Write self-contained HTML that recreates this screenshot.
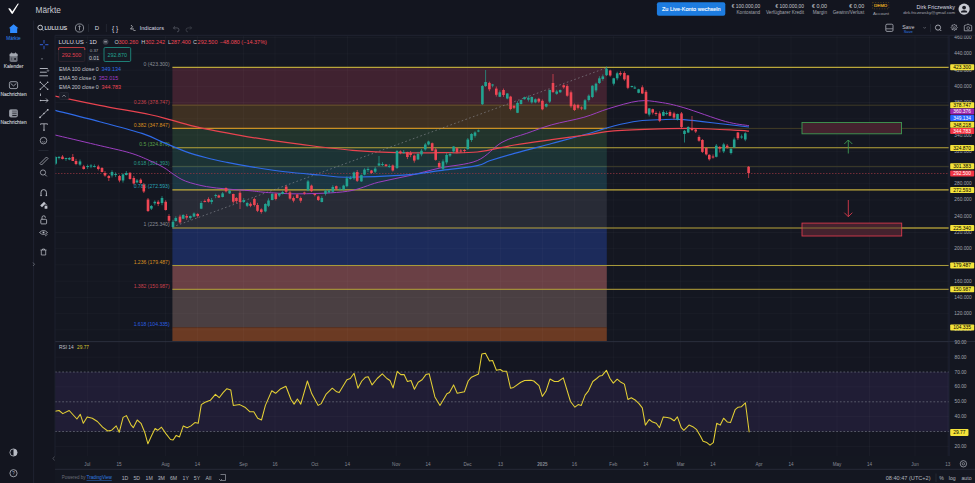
<!DOCTYPE html>
<html><head><meta charset='utf-8'><style>
html,body{margin:0;padding:0;width:975px;height:483px;overflow:hidden;background:#13151f;}
text{font-family:'Liberation Sans',sans-serif;}
</style></head><body>
<svg width='975' height='483' viewBox='0 0 975 483' style='position:absolute;left:0;top:0' font-family="'Liberation Sans', sans-serif"><rect width='975' height='483' fill='#13151f'/><rect x='55' y='35.5' width='920' height='447.5' fill='#141721'/><defs><clipPath id='mc'><rect x='55' y='35.5' width='894' height='305.5'/></clipPath><clipPath id='rc'><rect x='55' y='341.5' width='894' height='114.5'/></clipPath></defs><g clip-path='url(#mc)'><rect x='172.4' y='67.4' width='434.4' height='37.8' fill='#402230'/><rect x='172.4' y='105.2' width='434.4' height='23.200000000000003' fill='#3e3022'/><rect x='172.4' y='128.4' width='434.4' height='19.299999999999983' fill='#22342c'/><rect x='172.4' y='147.7' width='434.4' height='18.700000000000017' fill='#1c3335'/><rect x='172.4' y='166.4' width='434.4' height='23.400000000000006' fill='#1b3642'/><rect x='172.4' y='189.8' width='434.4' height='38.19999999999999' fill='#282b36'/><rect x='172.4' y='228' width='434.4' height='37.5' fill='#1c2b5b'/><rect x='172.4' y='265.5' width='434.4' height='23.80000000000001' fill='#6a4045'/><rect x='172.4' y='289.3' width='434.4' height='38.0' fill='#4a3f42'/><rect x='172.4' y='327.3' width='434.4' height='17.69999999999999' fill='#6b3a23'/><line x1='87.3' y1='35.5' x2='87.3' y2='341' stroke='#ffffff' stroke-opacity='0.035' stroke-width='0.8'/><line x1='119' y1='35.5' x2='119' y2='341' stroke='#ffffff' stroke-opacity='0.035' stroke-width='0.8'/><line x1='165.6' y1='35.5' x2='165.6' y2='341' stroke='#ffffff' stroke-opacity='0.035' stroke-width='0.8'/><line x1='197.4' y1='35.5' x2='197.4' y2='341' stroke='#ffffff' stroke-opacity='0.035' stroke-width='0.8'/><line x1='243.4' y1='35.5' x2='243.4' y2='341' stroke='#ffffff' stroke-opacity='0.035' stroke-width='0.8'/><line x1='275' y1='35.5' x2='275' y2='341' stroke='#ffffff' stroke-opacity='0.035' stroke-width='0.8'/><line x1='314.8' y1='35.5' x2='314.8' y2='341' stroke='#ffffff' stroke-opacity='0.035' stroke-width='0.8'/><line x1='347.4' y1='35.5' x2='347.4' y2='341' stroke='#ffffff' stroke-opacity='0.035' stroke-width='0.8'/><line x1='396.2' y1='35.5' x2='396.2' y2='341' stroke='#ffffff' stroke-opacity='0.035' stroke-width='0.8'/><line x1='428' y1='35.5' x2='428' y2='341' stroke='#ffffff' stroke-opacity='0.035' stroke-width='0.8'/><line x1='467.6' y1='35.5' x2='467.6' y2='341' stroke='#ffffff' stroke-opacity='0.035' stroke-width='0.8'/><line x1='500.6' y1='35.5' x2='500.6' y2='341' stroke='#ffffff' stroke-opacity='0.035' stroke-width='0.8'/><line x1='542.4' y1='35.5' x2='542.4' y2='341' stroke='#ffffff' stroke-opacity='0.035' stroke-width='0.8'/><line x1='574.4' y1='35.5' x2='574.4' y2='341' stroke='#ffffff' stroke-opacity='0.035' stroke-width='0.8'/><line x1='613.3' y1='35.5' x2='613.3' y2='341' stroke='#ffffff' stroke-opacity='0.035' stroke-width='0.8'/><line x1='645.7' y1='35.5' x2='645.7' y2='341' stroke='#ffffff' stroke-opacity='0.035' stroke-width='0.8'/><line x1='680.6' y1='35.5' x2='680.6' y2='341' stroke='#ffffff' stroke-opacity='0.035' stroke-width='0.8'/><line x1='712.9' y1='35.5' x2='712.9' y2='341' stroke='#ffffff' stroke-opacity='0.035' stroke-width='0.8'/><line x1='759' y1='35.5' x2='759' y2='341' stroke='#ffffff' stroke-opacity='0.035' stroke-width='0.8'/><line x1='791' y1='35.5' x2='791' y2='341' stroke='#ffffff' stroke-opacity='0.035' stroke-width='0.8'/><line x1='837' y1='35.5' x2='837' y2='341' stroke='#ffffff' stroke-opacity='0.035' stroke-width='0.8'/><line x1='869.5' y1='35.5' x2='869.5' y2='341' stroke='#ffffff' stroke-opacity='0.035' stroke-width='0.8'/><line x1='915' y1='35.5' x2='915' y2='341' stroke='#ffffff' stroke-opacity='0.035' stroke-width='0.8'/><line x1='947.8' y1='35.5' x2='947.8' y2='341' stroke='#ffffff' stroke-opacity='0.035' stroke-width='0.8'/><line x1='55' y1='37.6' x2='949' y2='37.6' stroke='#ffffff' stroke-opacity='0.035' stroke-width='0.8'/><line x1='55' y1='53.8' x2='949' y2='53.8' stroke='#ffffff' stroke-opacity='0.035' stroke-width='0.8'/><line x1='55' y1='70.1' x2='949' y2='70.1' stroke='#ffffff' stroke-opacity='0.035' stroke-width='0.8'/><line x1='55' y1='86.3' x2='949' y2='86.3' stroke='#ffffff' stroke-opacity='0.035' stroke-width='0.8'/><line x1='55' y1='102.5' x2='949' y2='102.5' stroke='#ffffff' stroke-opacity='0.035' stroke-width='0.8'/><line x1='55' y1='118.8' x2='949' y2='118.8' stroke='#ffffff' stroke-opacity='0.035' stroke-width='0.8'/><line x1='55' y1='135.0' x2='949' y2='135.0' stroke='#ffffff' stroke-opacity='0.035' stroke-width='0.8'/><line x1='55' y1='151.3' x2='949' y2='151.3' stroke='#ffffff' stroke-opacity='0.035' stroke-width='0.8'/><line x1='55' y1='167.5' x2='949' y2='167.5' stroke='#ffffff' stroke-opacity='0.035' stroke-width='0.8'/><line x1='55' y1='183.7' x2='949' y2='183.7' stroke='#ffffff' stroke-opacity='0.035' stroke-width='0.8'/><line x1='55' y1='200.0' x2='949' y2='200.0' stroke='#ffffff' stroke-opacity='0.035' stroke-width='0.8'/><line x1='55' y1='216.2' x2='949' y2='216.2' stroke='#ffffff' stroke-opacity='0.035' stroke-width='0.8'/><line x1='55' y1='232.5' x2='949' y2='232.5' stroke='#ffffff' stroke-opacity='0.035' stroke-width='0.8'/><line x1='55' y1='248.7' x2='949' y2='248.7' stroke='#ffffff' stroke-opacity='0.035' stroke-width='0.8'/><line x1='55' y1='264.9' x2='949' y2='264.9' stroke='#ffffff' stroke-opacity='0.035' stroke-width='0.8'/><line x1='55' y1='281.2' x2='949' y2='281.2' stroke='#ffffff' stroke-opacity='0.035' stroke-width='0.8'/><line x1='55' y1='297.4' x2='949' y2='297.4' stroke='#ffffff' stroke-opacity='0.035' stroke-width='0.8'/><line x1='55' y1='313.7' x2='949' y2='313.7' stroke='#ffffff' stroke-opacity='0.035' stroke-width='0.8'/><line x1='55' y1='329.9' x2='949' y2='329.9' stroke='#ffffff' stroke-opacity='0.035' stroke-width='0.8'/><line x1='172.4' y1='67.4' x2='949' y2='67.4' stroke='#b9a63a' stroke-width='1.3'/><line x1='172.4' y1='105.2' x2='949' y2='105.2' stroke='#3f3b26' stroke-width='1'/><line x1='172.4' y1='128.4' x2='949' y2='128.4' stroke='#423d27' stroke-width='1'/><line x1='172.4' y1='147.7' x2='949' y2='147.7' stroke='#b9a63a' stroke-width='1.1'/><line x1='172.4' y1='166.4' x2='949' y2='166.4' stroke='#3d3c2a' stroke-width='1'/><line x1='172.4' y1='189.8' x2='949' y2='189.8' stroke='#c2ad3c' stroke-width='1.3'/><line x1='172.4' y1='228' x2='949' y2='228' stroke='#b9a63a' stroke-width='1.2'/><line x1='172.4' y1='265.5' x2='949' y2='265.5' stroke='#a89a3a' stroke-width='1'/><line x1='172.4' y1='289.3' x2='949' y2='289.3' stroke='#b9a63a' stroke-width='1'/><line x1='172.4' y1='327.3' x2='949' y2='327.3' stroke='#3c3a2e' stroke-width='0.0'/><line x1='172.4' y1='128.4' x2='606.8' y2='128.4' stroke='#c98f25' stroke-width='1.1'/><line x1='172.4' y1='105.2' x2='606.8' y2='105.2' stroke='#6b4f2a' stroke-width='1'/><line x1='172.4' y1='166.4' x2='606.8' y2='166.4' stroke='#3f5a4a' stroke-width='1'/><line x1='172.5' y1='227' x2='606' y2='68' stroke='#9598a1' stroke-width='0.8' stroke-dasharray='1.6,2.4' opacity='0.7'/><line x1='55' y1='173.5' x2='949' y2='173.5' stroke='#9a3540' stroke-width='0.7' stroke-dasharray='1.5,1.5'/><text x='169.6' y='63.800000000000004' font-size='5.1' fill='#8a8d96' text-anchor='end' font-weight='normal' dominant-baseline='central' >0 (423.300)</text><text x='169.6' y='101.60000000000001' font-size='5.1' fill='#c8404c' text-anchor='end' font-weight='normal' dominant-baseline='central' >0.236 (378.747)</text><text x='169.6' y='124.80000000000001' font-size='5.1' fill='#d88e1e' text-anchor='end' font-weight='normal' dominant-baseline='central' >0.382 (347.847)</text><text x='169.6' y='144.1' font-size='5.1' fill='#58a04a' text-anchor='end' font-weight='normal' dominant-baseline='central' >0.5 (324.870)</text><text x='169.6' y='162.8' font-size='5.1' fill='#2a9a88' text-anchor='end' font-weight='normal' dominant-baseline='central' >0.618 (301.393)</text><text x='169.6' y='186.20000000000002' font-size='5.1' fill='#2aa3b8' text-anchor='end' font-weight='normal' dominant-baseline='central' >0.786 (272.593)</text><text x='169.6' y='224.4' font-size='5.1' fill='#8a8d96' text-anchor='end' font-weight='normal' dominant-baseline='central' >1 (225.340)</text><text x='169.6' y='261.9' font-size='5.1' fill='#d89020' text-anchor='end' font-weight='normal' dominant-baseline='central' >1.236 (179.487)</text><text x='169.6' y='285.7' font-size='5.1' fill='#c8404c' text-anchor='end' font-weight='normal' dominant-baseline='central' >1.382 (150.987)</text><text x='169.6' y='323.7' font-size='5.1' fill='#2a5ee0' text-anchor='end' font-weight='normal' dominant-baseline='central' >1.618 (104.335)</text><path d='M55.0,135.0 C61.8,136.6 83.1,141.6 95.6,144.6 C108.0,147.6 120.6,150.1 129.7,152.8 C138.8,155.5 144.5,158.3 150.2,160.8 C155.9,163.3 160.1,165.4 163.9,167.6 C167.8,169.8 169.7,171.9 173.3,174.2 C176.9,176.5 180.2,179.1 185.7,181.2 C191.2,183.3 199.5,185.3 206.4,186.6 C213.3,187.9 219.7,188.3 227.0,189.0 C234.3,189.7 243.1,190.1 250.0,190.7 C256.9,191.3 260.0,192.1 268.5,192.6 C277.0,193.1 287.9,194.0 301.0,193.8 C314.1,193.6 334.5,193.2 347.4,191.3 C360.3,189.4 367.8,184.9 378.2,182.3 C388.6,179.7 399.7,177.9 410.0,175.5 C420.3,173.1 428.8,170.5 440.0,168.0 C451.2,165.5 466.9,164.9 477.2,160.6 C487.5,156.3 493.7,146.9 502.0,142.3 C510.3,137.8 518.5,136.2 526.8,133.3 C535.1,130.4 542.2,127.5 551.7,124.8 C561.2,122.1 574.4,120.0 583.9,117.3 C593.4,114.6 599.6,111.3 608.7,108.6 C617.8,105.9 630.0,102.0 638.5,101.0 C647.0,100.0 652.4,101.2 660.0,102.3 C667.6,103.4 673.0,104.5 683.9,107.7 C694.8,110.9 714.6,118.5 725.5,121.5 C736.4,124.5 745.1,125.0 749.0,125.7' fill='none' stroke='#9c3fc0' stroke-width='1.0'/><path d='M55.0,110.3 C62.5,112.2 85.2,117.8 99.7,121.7 C114.2,125.6 131.1,129.8 142.0,133.4 C152.9,137.0 157.7,140.1 165.0,143.1 C172.3,146.1 178.8,149.1 185.7,151.6 C192.6,154.1 199.5,156.0 206.4,157.8 C213.3,159.6 219.7,160.9 227.0,162.4 C234.3,163.9 240.3,165.0 250.0,166.6 C259.7,168.2 273.3,170.4 285.0,171.8 C296.7,173.2 309.6,174.1 320.0,175.0 C330.4,175.9 333.4,177.2 347.4,177.2 C361.4,177.2 388.4,176.2 403.8,175.1 C419.2,174.0 427.8,172.2 440.0,170.6 C452.2,169.0 468.9,167.2 477.2,165.6 C485.5,164.0 483.4,162.8 489.6,160.8 C495.8,158.8 504.0,156.3 514.4,153.4 C524.8,150.5 539.3,146.8 551.7,143.5 C564.1,140.2 578.6,136.4 588.9,133.5 C599.2,130.6 605.4,128.1 613.7,126.0 C622.0,123.9 630.8,122.0 638.5,121.0 C646.2,120.0 652.4,119.9 660.0,119.7 C667.6,119.5 673.0,118.8 683.9,119.6 C694.8,120.4 714.6,123.1 725.5,124.3 C736.4,125.5 745.1,126.5 749.0,127.0' fill='none' stroke='#2f6be8' stroke-width='1.15'/><path d='M55.0,96.1 C62.5,97.6 84.0,102.2 99.7,105.3 C115.4,108.4 137.4,112.0 149.4,114.5 C161.4,117.0 163.3,118.0 171.7,120.2 C180.1,122.4 188.3,125.1 199.7,127.6 C211.1,130.1 228.3,133.2 240.0,135.3 C251.7,137.4 259.8,138.7 270.0,140.2 C280.2,141.7 287.2,142.7 301.0,144.4 C314.8,146.1 335.5,148.9 352.6,150.3 C369.7,151.7 389.2,152.4 403.8,152.8 C418.4,153.2 427.8,152.8 440.0,152.7 C452.2,152.6 464.8,153.3 477.2,152.0 C489.6,150.7 502.0,147.1 514.4,145.0 C526.8,142.9 539.3,141.3 551.7,139.6 C564.1,137.9 578.6,136.0 588.9,134.6 C599.2,133.2 601.9,131.8 613.7,130.9 C625.6,130.0 646.0,129.3 660.0,128.9 C674.0,128.5 684.6,128.2 697.8,128.5 C711.0,128.8 730.8,130.0 739.3,130.4 C747.8,130.8 747.4,131.1 749.0,131.2' fill='none' stroke='#e8434f' stroke-width='1.25'/><line x1='55.7' y1='156.2' x2='55.7' y2='165.0' stroke='#22a391' stroke-width='0.7'/><rect x='54.40' y='157.0' width='2.6' height='6.7' fill='#22a391'/><line x1='59.0' y1='156.0' x2='59.0' y2='159.4' stroke='#22a391' stroke-width='0.7'/><rect x='57.70' y='157.0' width='2.6' height='1.0' fill='#22a391'/><line x1='62.5' y1='155.1' x2='62.5' y2='159.4' stroke='#ef4654' stroke-width='0.7'/><rect x='61.20' y='156.6' width='2.6' height='2.4' fill='#ef4654'/><line x1='66.0' y1='157.7' x2='66.0' y2='160.9' stroke='#22a391' stroke-width='0.7'/><rect x='64.70' y='158.0' width='2.6' height='1.0' fill='#22a391'/><line x1='69.4' y1='157.2' x2='69.4' y2='160.2' stroke='#22a391' stroke-width='0.7'/><rect x='68.10' y='158.0' width='2.6' height='1.5' fill='#22a391'/><line x1='72.8' y1='154.0' x2='72.8' y2='161.0' stroke='#ef4654' stroke-width='0.7'/><rect x='71.50' y='157.0' width='2.6' height='4.0' fill='#ef4654'/><line x1='76.0' y1='158.8' x2='76.0' y2='165.2' stroke='#ef4654' stroke-width='0.7'/><rect x='74.70' y='161.0' width='2.6' height='3.0' fill='#ef4654'/><line x1='80.0' y1='159.5' x2='80.0' y2='165.8' stroke='#22a391' stroke-width='0.7'/><rect x='78.70' y='161.4' width='2.6' height='3.2' fill='#22a391'/><line x1='83.7' y1='164.9' x2='83.7' y2='169.6' stroke='#ef4654' stroke-width='0.7'/><rect x='82.40' y='166.4' width='2.6' height='2.6' fill='#ef4654'/><line x1='87.6' y1='164.5' x2='87.6' y2='168.9' stroke='#22a391' stroke-width='0.7'/><rect x='86.30' y='166.0' width='2.6' height='1.0' fill='#22a391'/><line x1='91.0' y1='164.2' x2='91.0' y2='168.2' stroke='#22a391' stroke-width='0.7'/><rect x='89.70' y='165.5' width='2.6' height='1.0' fill='#22a391'/><line x1='94.4' y1='164.4' x2='94.4' y2='167.4' stroke='#22a391' stroke-width='0.7'/><rect x='93.10' y='166.0' width='2.6' height='1.0' fill='#22a391'/><line x1='98.3' y1='164.8' x2='98.3' y2='170.4' stroke='#ef4654' stroke-width='0.7'/><rect x='97.00' y='166.5' width='2.6' height='2.5' fill='#ef4654'/><line x1='102.0' y1='167.1' x2='102.0' y2='172.4' stroke='#ef4654' stroke-width='0.7'/><rect x='100.70' y='168.0' width='2.6' height='4.0' fill='#ef4654'/><line x1='105.0' y1='171.1' x2='105.0' y2='176.7' stroke='#ef4654' stroke-width='0.7'/><rect x='103.70' y='173.0' width='2.6' height='2.5' fill='#ef4654'/><line x1='108.8' y1='175.0' x2='108.8' y2='181.0' stroke='#ef4654' stroke-width='0.7'/><rect x='107.50' y='176.0' width='2.6' height='2.0' fill='#ef4654'/><line x1='112.0' y1='170.3' x2='112.0' y2='177.5' stroke='#22a391' stroke-width='0.7'/><rect x='110.70' y='172.0' width='2.6' height='3.5' fill='#22a391'/><line x1='115.6' y1='172.3' x2='115.6' y2='177.1' stroke='#22a391' stroke-width='0.7'/><rect x='114.30' y='174.0' width='2.6' height='1.0' fill='#22a391'/><line x1='119.5' y1='174.9' x2='119.5' y2='182.3' stroke='#ef4654' stroke-width='0.7'/><rect x='118.20' y='176.0' width='2.6' height='4.5' fill='#ef4654'/><line x1='123.0' y1='173.3' x2='123.0' y2='182.6' stroke='#22a391' stroke-width='0.7'/><rect x='121.70' y='174.4' width='2.6' height='6.1' fill='#22a391'/><line x1='126.3' y1='171.0' x2='126.3' y2='175.5' stroke='#22a391' stroke-width='0.7'/><rect x='125.00' y='173.0' width='2.6' height='2.0' fill='#22a391'/><line x1='130.0' y1='172.2' x2='130.0' y2='179.7' stroke='#ef4654' stroke-width='0.7'/><rect x='128.70' y='172.8' width='2.6' height='6.2' fill='#ef4654'/><line x1='133.8' y1='175.9' x2='133.8' y2='184.6' stroke='#ef4654' stroke-width='0.7'/><rect x='132.50' y='178.0' width='2.6' height='5.5' fill='#ef4654'/><line x1='137.0' y1='179.0' x2='137.0' y2='183.3' stroke='#22a391' stroke-width='0.7'/><rect x='135.70' y='180.5' width='2.6' height='1.9' fill='#22a391'/><line x1='140.7' y1='178.4' x2='140.7' y2='184.0' stroke='#ef4654' stroke-width='0.7'/><rect x='139.40' y='179.7' width='2.6' height='3.3' fill='#ef4654'/><line x1='143.8' y1='183.0' x2='143.8' y2='193.0' stroke='#ef4654' stroke-width='0.7'/><rect x='142.50' y='184.7' width='2.6' height='6.8' fill='#ef4654'/><line x1='148.0' y1='198.0' x2='148.0' y2='212.0' stroke='#ef4654' stroke-width='0.7'/><rect x='146.70' y='199.5' width='2.6' height='11.5' fill='#ef4654'/><line x1='151.4' y1='205.0' x2='151.4' y2='210.0' stroke='#22a391' stroke-width='0.7'/><rect x='150.10' y='206.0' width='2.6' height='2.6' fill='#22a391'/><line x1='154.8' y1='200.4' x2='154.8' y2='205.3' stroke='#22a391' stroke-width='0.7'/><rect x='153.50' y='201.8' width='2.6' height='1.5' fill='#22a391'/><line x1='158.2' y1='200.2' x2='158.2' y2='206.1' stroke='#ef4654' stroke-width='0.7'/><rect x='156.90' y='201.8' width='2.6' height='2.2' fill='#ef4654'/><line x1='162.0' y1='196.1' x2='162.0' y2='205.2' stroke='#22a391' stroke-width='0.7'/><rect x='160.70' y='198.0' width='2.6' height='5.0' fill='#22a391'/><line x1='165.7' y1='200.2' x2='165.7' y2='210.6' stroke='#ef4654' stroke-width='0.7'/><rect x='164.40' y='201.8' width='2.6' height='8.2' fill='#ef4654'/><line x1='169.0' y1='214.1' x2='169.0' y2='222.8' stroke='#ef4654' stroke-width='0.7'/><rect x='167.70' y='216.0' width='2.6' height='4.7' fill='#ef4654'/><line x1='173.0' y1='219.8' x2='173.0' y2='228.4' stroke='#22a391' stroke-width='0.7'/><rect x='171.70' y='221.8' width='2.6' height='5.2' fill='#22a391'/><line x1='175.8' y1='216.3' x2='175.8' y2='221.7' stroke='#22a391' stroke-width='0.7'/><rect x='174.50' y='218.0' width='2.6' height='3.0' fill='#22a391'/><line x1='180.0' y1='214.7' x2='180.0' y2='223.8' stroke='#ef4654' stroke-width='0.7'/><rect x='178.70' y='216.6' width='2.6' height='5.8' fill='#ef4654'/><line x1='183.2' y1='214.2' x2='183.2' y2='219.1' stroke='#22a391' stroke-width='0.7'/><rect x='181.90' y='215.0' width='2.6' height='3.7' fill='#22a391'/><line x1='186.7' y1='214.1' x2='186.7' y2='219.8' stroke='#ef4654' stroke-width='0.7'/><rect x='185.40' y='216.0' width='2.6' height='1.6' fill='#ef4654'/><line x1='190.3' y1='215.5' x2='190.3' y2='219.8' stroke='#22a391' stroke-width='0.7'/><rect x='189.00' y='216.0' width='2.6' height='2.0' fill='#22a391'/><line x1='194.0' y1='212.4' x2='194.0' y2='217.2' stroke='#22a391' stroke-width='0.7'/><rect x='192.70' y='213.5' width='2.6' height='3.1' fill='#22a391'/><line x1='197.7' y1='213.1' x2='197.7' y2='217.8' stroke='#ef4654' stroke-width='0.7'/><rect x='196.40' y='214.0' width='2.6' height='2.0' fill='#ef4654'/><line x1='201.2' y1='201.0' x2='201.2' y2='209.1' stroke='#22a391' stroke-width='0.7'/><rect x='199.90' y='203.0' width='2.6' height='5.7' fill='#22a391'/><line x1='204.8' y1='199.5' x2='204.8' y2='202.4' stroke='#ef4654' stroke-width='0.7'/><rect x='203.50' y='201.0' width='2.6' height='1.0' fill='#ef4654'/><line x1='208.5' y1='197.3' x2='208.5' y2='202.6' stroke='#ef4654' stroke-width='0.7'/><rect x='207.20' y='199.0' width='2.6' height='2.7' fill='#ef4654'/><line x1='211.6' y1='198.0' x2='211.6' y2='204.2' stroke='#22a391' stroke-width='0.7'/><rect x='210.30' y='200.0' width='2.6' height='2.0' fill='#22a391'/><line x1='215.7' y1='193.7' x2='215.7' y2='198.2' stroke='#22a391' stroke-width='0.7'/><rect x='214.40' y='195.0' width='2.6' height='1.0' fill='#22a391'/><line x1='218.8' y1='194.6' x2='218.8' y2='197.9' stroke='#ef4654' stroke-width='0.7'/><rect x='217.50' y='195.5' width='2.6' height='2.0' fill='#ef4654'/><line x1='222.6' y1='192.0' x2='222.6' y2='197.4' stroke='#22a391' stroke-width='0.7'/><rect x='221.30' y='193.4' width='2.6' height='3.6' fill='#22a391'/><line x1='226.0' y1='187.3' x2='226.0' y2='192.4' stroke='#ef4654' stroke-width='0.7'/><rect x='224.70' y='188.0' width='2.6' height='3.3' fill='#ef4654'/><line x1='229.6' y1='189.2' x2='229.6' y2='194.0' stroke='#22a391' stroke-width='0.7'/><rect x='228.30' y='190.7' width='2.6' height='2.7' fill='#22a391'/><line x1='233.3' y1='193.6' x2='233.3' y2='203.6' stroke='#ef4654' stroke-width='0.7'/><rect x='232.00' y='194.0' width='2.6' height='7.7' fill='#ef4654'/><line x1='236.4' y1='197.1' x2='236.4' y2='203.1' stroke='#ef4654' stroke-width='0.7'/><rect x='235.10' y='198.0' width='2.6' height='3.0' fill='#ef4654'/><line x1='240.0' y1='191.0' x2='240.0' y2='209.0' stroke='#ef4654' stroke-width='0.7'/><rect x='238.70' y='192.8' width='2.6' height='9.2' fill='#ef4654'/><line x1='243.7' y1='198.0' x2='243.7' y2='203.0' stroke='#22a391' stroke-width='0.7'/><rect x='242.40' y='200.0' width='2.6' height='2.0' fill='#22a391'/><line x1='247.2' y1='201.8' x2='247.2' y2='207.1' stroke='#22a391' stroke-width='0.7'/><rect x='245.90' y='203.0' width='2.6' height='2.8' fill='#22a391'/><line x1='250.5' y1='202.3' x2='250.5' y2='207.2' stroke='#ef4654' stroke-width='0.7'/><rect x='249.20' y='203.8' width='2.6' height='2.0' fill='#ef4654'/><line x1='254.4' y1='197.6' x2='254.4' y2='206.5' stroke='#ef4654' stroke-width='0.7'/><rect x='253.10' y='199.0' width='2.6' height='6.0' fill='#ef4654'/><line x1='257.5' y1='202.9' x2='257.5' y2='212.1' stroke='#ef4654' stroke-width='0.7'/><rect x='256.20' y='205.0' width='2.6' height='5.8' fill='#ef4654'/><line x1='261.3' y1='208.3' x2='261.3' y2='213.7' stroke='#ef4654' stroke-width='0.7'/><rect x='260.00' y='209.4' width='2.6' height='2.6' fill='#ef4654'/><line x1='265.4' y1='203.2' x2='265.4' y2='212.3' stroke='#22a391' stroke-width='0.7'/><rect x='264.10' y='204.0' width='2.6' height='7.4' fill='#22a391'/><line x1='268.5' y1='198.3' x2='268.5' y2='207.1' stroke='#22a391' stroke-width='0.7'/><rect x='267.20' y='200.5' width='2.6' height='5.3' fill='#22a391'/><line x1='272.2' y1='192.7' x2='272.2' y2='200.3' stroke='#22a391' stroke-width='0.7'/><rect x='270.90' y='194.0' width='2.6' height='6.0' fill='#22a391'/><line x1='275.8' y1='192.7' x2='275.8' y2='200.4' stroke='#ef4654' stroke-width='0.7'/><rect x='274.50' y='193.8' width='2.6' height='5.2' fill='#ef4654'/><line x1='279.3' y1='193.1' x2='279.3' y2='197.0' stroke='#22a391' stroke-width='0.7'/><rect x='278.00' y='193.4' width='2.6' height='2.1' fill='#22a391'/><line x1='282.6' y1='190.5' x2='282.6' y2='194.4' stroke='#22a391' stroke-width='0.7'/><rect x='281.30' y='192.0' width='2.6' height='2.0' fill='#22a391'/><line x1='286.2' y1='185.1' x2='286.2' y2='193.0' stroke='#ef4654' stroke-width='0.7'/><rect x='284.90' y='186.6' width='2.6' height='5.2' fill='#ef4654'/><line x1='290.0' y1='190.8' x2='290.0' y2='199.6' stroke='#ef4654' stroke-width='0.7'/><rect x='288.70' y='192.4' width='2.6' height='6.2' fill='#ef4654'/><line x1='293.5' y1='196.4' x2='293.5' y2='202.4' stroke='#ef4654' stroke-width='0.7'/><rect x='292.20' y='198.0' width='2.6' height='2.7' fill='#ef4654'/><line x1='297.2' y1='194.2' x2='297.2' y2='198.4' stroke='#ef4654' stroke-width='0.7'/><rect x='295.90' y='194.5' width='2.6' height='3.5' fill='#ef4654'/><line x1='300.7' y1='196.4' x2='300.7' y2='202.8' stroke='#ef4654' stroke-width='0.7'/><rect x='299.40' y='198.0' width='2.6' height='2.7' fill='#ef4654'/><line x1='304.4' y1='191.7' x2='304.4' y2='194.7' stroke='#ef4654' stroke-width='0.7'/><rect x='303.10' y='192.5' width='2.6' height='1.0' fill='#ef4654'/><line x1='308.0' y1='180.0' x2='308.0' y2='191.2' stroke='#22a391' stroke-width='0.7'/><rect x='306.70' y='181.4' width='2.6' height='8.9' fill='#22a391'/><line x1='311.5' y1='184.6' x2='311.5' y2='192.1' stroke='#ef4654' stroke-width='0.7'/><rect x='310.20' y='185.6' width='2.6' height='5.6' fill='#ef4654'/><line x1='314.8' y1='193.0' x2='314.8' y2='196.4' stroke='#ef4654' stroke-width='0.7'/><rect x='313.50' y='194.0' width='2.6' height='1.0' fill='#ef4654'/><line x1='318.3' y1='195.6' x2='318.3' y2='201.0' stroke='#ef4654' stroke-width='0.7'/><rect x='317.00' y='196.5' width='2.6' height='3.5' fill='#ef4654'/><line x1='321.8' y1='196.2' x2='321.8' y2='202.4' stroke='#22a391' stroke-width='0.7'/><rect x='320.50' y='198.0' width='2.6' height='4.0' fill='#22a391'/><line x1='325.5' y1='189.3' x2='325.5' y2='195.5' stroke='#22a391' stroke-width='0.7'/><rect x='324.20' y='190.7' width='2.6' height='3.1' fill='#22a391'/><line x1='329.0' y1='189.4' x2='329.0' y2='193.1' stroke='#22a391' stroke-width='0.7'/><rect x='327.70' y='190.3' width='2.6' height='2.1' fill='#22a391'/><line x1='332.8' y1='185.2' x2='332.8' y2='192.6' stroke='#22a391' stroke-width='0.7'/><rect x='331.50' y='187.0' width='2.6' height='4.8' fill='#22a391'/><line x1='336.3' y1='185.5' x2='336.3' y2='189.8' stroke='#ef4654' stroke-width='0.7'/><rect x='335.00' y='186.2' width='2.6' height='2.5' fill='#ef4654'/><line x1='340.0' y1='187.4' x2='340.0' y2='190.5' stroke='#22a391' stroke-width='0.7'/><rect x='338.70' y='189.0' width='2.6' height='1.0' fill='#22a391'/><line x1='343.6' y1='184.7' x2='343.6' y2='190.6' stroke='#22a391' stroke-width='0.7'/><rect x='342.30' y='185.6' width='2.6' height='4.1' fill='#22a391'/><line x1='346.9' y1='176.4' x2='346.9' y2='187.3' stroke='#22a391' stroke-width='0.7'/><rect x='345.60' y='178.3' width='2.6' height='7.9' fill='#22a391'/><line x1='350.4' y1='176.1' x2='350.4' y2='179.6' stroke='#22a391' stroke-width='0.7'/><rect x='349.10' y='178.0' width='2.6' height='1.0' fill='#22a391'/><line x1='354.0' y1='171.6' x2='354.0' y2='179.8' stroke='#22a391' stroke-width='0.7'/><rect x='352.70' y='172.5' width='2.6' height='5.8' fill='#22a391'/><line x1='357.2' y1='170.0' x2='357.2' y2='182.0' stroke='#ef4654' stroke-width='0.7'/><rect x='355.90' y='172.0' width='2.6' height='8.8' fill='#ef4654'/><line x1='361.4' y1='174.5' x2='361.4' y2='181.9' stroke='#22a391' stroke-width='0.7'/><rect x='360.10' y='175.2' width='2.6' height='6.2' fill='#22a391'/><line x1='364.5' y1='168.3' x2='364.5' y2='175.3' stroke='#22a391' stroke-width='0.7'/><rect x='363.20' y='169.6' width='2.6' height='5.0' fill='#22a391'/><line x1='368.0' y1='167.2' x2='368.0' y2='171.9' stroke='#22a391' stroke-width='0.7'/><rect x='366.70' y='169.0' width='2.6' height='1.0' fill='#22a391'/><line x1='371.5' y1='169.9' x2='371.5' y2='173.8' stroke='#ef4654' stroke-width='0.7'/><rect x='370.20' y='170.5' width='2.6' height='2.5' fill='#ef4654'/><line x1='375.2' y1='166.8' x2='375.2' y2='173.2' stroke='#22a391' stroke-width='0.7'/><rect x='373.90' y='168.6' width='2.6' height='3.1' fill='#22a391'/><line x1='379.0' y1='156.0' x2='379.0' y2='166.0' stroke='#22a391' stroke-width='0.7'/><rect x='377.70' y='163.4' width='2.6' height='2.1' fill='#22a391'/><line x1='382.5' y1='162.2' x2='382.5' y2='166.0' stroke='#22a391' stroke-width='0.7'/><rect x='381.20' y='164.0' width='2.6' height='1.0' fill='#22a391'/><line x1='386.0' y1='164.0' x2='386.0' y2='166.9' stroke='#ef4654' stroke-width='0.7'/><rect x='384.70' y='164.5' width='2.6' height='1.5' fill='#ef4654'/><line x1='389.3' y1='164.2' x2='389.3' y2='167.8' stroke='#22a391' stroke-width='0.7'/><rect x='388.00' y='166.0' width='2.6' height='1.0' fill='#22a391'/><line x1='392.8' y1='164.5' x2='392.8' y2='171.6' stroke='#ef4654' stroke-width='0.7'/><rect x='391.50' y='165.5' width='2.6' height='5.0' fill='#ef4654'/><line x1='397.0' y1='150.0' x2='397.0' y2='169.0' stroke='#22a391' stroke-width='0.7'/><rect x='395.70' y='151.0' width='2.6' height='17.0' fill='#22a391'/><line x1='400.4' y1='150.3' x2='400.4' y2='154.3' stroke='#ef4654' stroke-width='0.7'/><rect x='399.10' y='151.4' width='2.6' height='1.8' fill='#ef4654'/><line x1='403.7' y1='150.0' x2='403.7' y2='153.6' stroke='#22a391' stroke-width='0.7'/><rect x='402.40' y='152.0' width='2.6' height='1.0' fill='#22a391'/><line x1='407.4' y1='151.7' x2='407.4' y2='159.1' stroke='#ef4654' stroke-width='0.7'/><rect x='406.10' y='152.0' width='2.6' height='5.0' fill='#ef4654'/><line x1='410.6' y1='151.0' x2='410.6' y2='157.2' stroke='#ef4654' stroke-width='0.7'/><rect x='409.30' y='153.0' width='2.6' height='2.0' fill='#ef4654'/><line x1='414.3' y1='154.5' x2='414.3' y2='162.7' stroke='#ef4654' stroke-width='0.7'/><rect x='413.00' y='155.6' width='2.6' height='5.0' fill='#ef4654'/><line x1='418.0' y1='151.9' x2='418.0' y2='160.1' stroke='#22a391' stroke-width='0.7'/><rect x='416.70' y='154.0' width='2.6' height='5.4' fill='#22a391'/><line x1='421.5' y1='149.0' x2='421.5' y2='156.3' stroke='#22a391' stroke-width='0.7'/><rect x='420.20' y='150.7' width='2.6' height='3.7' fill='#22a391'/><line x1='425.3' y1='142.9' x2='425.3' y2='150.7' stroke='#22a391' stroke-width='0.7'/><rect x='424.00' y='144.5' width='2.6' height='4.9' fill='#22a391'/><line x1='428.5' y1='140.7' x2='428.5' y2='145.4' stroke='#22a391' stroke-width='0.7'/><rect x='427.20' y='141.5' width='2.6' height='3.0' fill='#22a391'/><line x1='432.2' y1='142.5' x2='432.2' y2='151.1' stroke='#ef4654' stroke-width='0.7'/><rect x='430.90' y='143.2' width='2.6' height='7.5' fill='#ef4654'/><line x1='435.7' y1='148.0' x2='435.7' y2='160.7' stroke='#ef4654' stroke-width='0.7'/><rect x='434.40' y='149.4' width='2.6' height='10.5' fill='#ef4654'/><line x1='439.2' y1='161.2' x2='439.2' y2='167.7' stroke='#ef4654' stroke-width='0.7'/><rect x='437.90' y='163.0' width='2.6' height='4.3' fill='#ef4654'/><line x1='443.0' y1='159.4' x2='443.0' y2='170.4' stroke='#22a391' stroke-width='0.7'/><rect x='441.70' y='161.4' width='2.6' height='7.4' fill='#22a391'/><line x1='446.6' y1='152.9' x2='446.6' y2='164.4' stroke='#22a391' stroke-width='0.7'/><rect x='445.30' y='155.0' width='2.6' height='7.4' fill='#22a391'/><line x1='450.0' y1='152.0' x2='450.0' y2='156.9' stroke='#22a391' stroke-width='0.7'/><rect x='448.70' y='154.0' width='2.6' height='1.5' fill='#22a391'/><line x1='453.6' y1='146.2' x2='453.6' y2='153.1' stroke='#22a391' stroke-width='0.7'/><rect x='452.30' y='146.5' width='2.6' height='4.9' fill='#22a391'/><line x1='457.0' y1='147.6' x2='457.0' y2='153.3' stroke='#ef4654' stroke-width='0.7'/><rect x='455.70' y='148.2' width='2.6' height='4.2' fill='#ef4654'/><line x1='460.8' y1='148.9' x2='460.8' y2='152.8' stroke='#ef4654' stroke-width='0.7'/><rect x='459.50' y='150.5' width='2.6' height='1.0' fill='#ef4654'/><line x1='464.5' y1='148.9' x2='464.5' y2='153.1' stroke='#ef4654' stroke-width='0.7'/><rect x='463.20' y='150.0' width='2.6' height='1.0' fill='#ef4654'/><line x1='467.8' y1='138.0' x2='467.8' y2='149.9' stroke='#22a391' stroke-width='0.7'/><rect x='466.50' y='139.5' width='2.6' height='9.5' fill='#22a391'/><line x1='471.5' y1='133.2' x2='471.5' y2='141.9' stroke='#22a391' stroke-width='0.7'/><rect x='470.20' y='134.0' width='2.6' height='6.0' fill='#22a391'/><line x1='475.0' y1='131.3' x2='475.0' y2='137.6' stroke='#22a391' stroke-width='0.7'/><rect x='473.70' y='132.5' width='2.6' height='3.3' fill='#22a391'/><line x1='478.4' y1='129.5' x2='478.4' y2='132.2' stroke='#22a391' stroke-width='0.7'/><rect x='477.10' y='130.5' width='2.6' height='1.0' fill='#22a391'/><line x1='482.4' y1='85.0' x2='482.4' y2='105.0' stroke='#22a391' stroke-width='0.7'/><rect x='481.10' y='86.0' width='2.6' height='18.2' fill='#22a391'/><line x1='485.6' y1='70.0' x2='485.6' y2='87.0' stroke='#22a391' stroke-width='0.7'/><rect x='484.30' y='82.0' width='2.6' height='4.0' fill='#22a391'/><line x1='489.4' y1='81.6' x2='489.4' y2='91.2' stroke='#ef4654' stroke-width='0.7'/><rect x='488.10' y='82.9' width='2.6' height='6.4' fill='#ef4654'/><line x1='492.6' y1='83.9' x2='492.6' y2='87.3' stroke='#22a391' stroke-width='0.7'/><rect x='491.30' y='84.5' width='2.6' height='1.0' fill='#22a391'/><line x1='496.3' y1='86.5' x2='496.3' y2='96.6' stroke='#ef4654' stroke-width='0.7'/><rect x='495.00' y='88.6' width='2.6' height='6.2' fill='#ef4654'/><line x1='499.8' y1='90.4' x2='499.8' y2='97.1' stroke='#22a391' stroke-width='0.7'/><rect x='498.50' y='92.3' width='2.6' height='4.5' fill='#22a391'/><line x1='503.5' y1='88.5' x2='503.5' y2='96.9' stroke='#ef4654' stroke-width='0.7'/><rect x='502.20' y='90.0' width='2.6' height='5.0' fill='#ef4654'/><line x1='507.3' y1='93.1' x2='507.3' y2='99.3' stroke='#22a391' stroke-width='0.7'/><rect x='506.00' y='93.5' width='2.6' height='5.0' fill='#22a391'/><line x1='510.6' y1='95.8' x2='510.6' y2='110.3' stroke='#ef4654' stroke-width='0.7'/><rect x='509.30' y='96.6' width='2.6' height='12.4' fill='#ef4654'/><line x1='514.0' y1='104.9' x2='514.0' y2='109.0' stroke='#ef4654' stroke-width='0.7'/><rect x='512.70' y='106.0' width='2.6' height='1.8' fill='#ef4654'/><line x1='517.5' y1='101.2' x2='517.5' y2='113.1' stroke='#22a391' stroke-width='0.7'/><rect x='516.20' y='103.0' width='2.6' height='9.8' fill='#22a391'/><line x1='521.0' y1='99.6' x2='521.0' y2='104.5' stroke='#22a391' stroke-width='0.7'/><rect x='519.70' y='100.0' width='2.6' height='4.0' fill='#22a391'/><line x1='524.5' y1='96.7' x2='524.5' y2='99.6' stroke='#22a391' stroke-width='0.7'/><rect x='523.20' y='97.2' width='2.6' height='2.0' fill='#22a391'/><line x1='528.4' y1='95.5' x2='528.4' y2='101.6' stroke='#22a391' stroke-width='0.7'/><rect x='527.10' y='97.7' width='2.6' height='2.0' fill='#22a391'/><line x1='531.8' y1='96.5' x2='531.8' y2='103.7' stroke='#22a391' stroke-width='0.7'/><rect x='530.50' y='97.0' width='2.6' height='5.4' fill='#22a391'/><line x1='535.4' y1='98.4' x2='535.4' y2='103.3' stroke='#22a391' stroke-width='0.7'/><rect x='534.10' y='99.3' width='2.6' height='3.1' fill='#22a391'/><line x1='538.8' y1='97.8' x2='538.8' y2='103.1' stroke='#ef4654' stroke-width='0.7'/><rect x='537.50' y='98.8' width='2.6' height='2.8' fill='#ef4654'/><line x1='542.4' y1='99.4' x2='542.4' y2='110.3' stroke='#ef4654' stroke-width='0.7'/><rect x='541.10' y='100.8' width='2.6' height='8.5' fill='#ef4654'/><line x1='546.3' y1='103.3' x2='546.3' y2='107.5' stroke='#22a391' stroke-width='0.7'/><rect x='545.00' y='104.0' width='2.6' height='2.6' fill='#22a391'/><line x1='549.7' y1='89.5' x2='549.7' y2='103.0' stroke='#22a391' stroke-width='0.7'/><rect x='548.40' y='90.0' width='2.6' height='11.6' fill='#22a391'/><line x1='553.0' y1='74.0' x2='553.0' y2='93.0' stroke='#ef4654' stroke-width='0.7'/><rect x='551.70' y='83.0' width='2.6' height='9.0' fill='#ef4654'/><line x1='556.7' y1='89.8' x2='556.7' y2='94.8' stroke='#22a391' stroke-width='0.7'/><rect x='555.40' y='91.5' width='2.6' height='2.3' fill='#22a391'/><line x1='560.2' y1='89.5' x2='560.2' y2='92.9' stroke='#22a391' stroke-width='0.7'/><rect x='558.90' y='90.0' width='2.6' height='2.3' fill='#22a391'/><line x1='563.7' y1='84.3' x2='563.7' y2='88.7' stroke='#ef4654' stroke-width='0.7'/><rect x='562.40' y='85.3' width='2.6' height='2.0' fill='#ef4654'/><line x1='567.2' y1='84.2' x2='567.2' y2='96.7' stroke='#ef4654' stroke-width='0.7'/><rect x='565.90' y='86.0' width='2.6' height='9.7' fill='#ef4654'/><line x1='571.0' y1='90.5' x2='571.0' y2='107.7' stroke='#ef4654' stroke-width='0.7'/><rect x='569.70' y='92.3' width='2.6' height='13.9' fill='#ef4654'/><line x1='574.5' y1='103.6' x2='574.5' y2='111.0' stroke='#ef4654' stroke-width='0.7'/><rect x='573.20' y='104.7' width='2.6' height='5.3' fill='#ef4654'/><line x1='578.0' y1='103.8' x2='578.0' y2='109.4' stroke='#ef4654' stroke-width='0.7'/><rect x='576.70' y='105.0' width='2.6' height='2.8' fill='#ef4654'/><line x1='581.5' y1='106.4' x2='581.5' y2='110.1' stroke='#ef4654' stroke-width='0.7'/><rect x='580.20' y='107.5' width='2.6' height='1.0' fill='#ef4654'/><line x1='585.0' y1='99.1' x2='585.0' y2='110.1' stroke='#22a391' stroke-width='0.7'/><rect x='583.70' y='100.3' width='2.6' height='9.0' fill='#22a391'/><line x1='588.8' y1='94.4' x2='588.8' y2='101.6' stroke='#22a391' stroke-width='0.7'/><rect x='587.50' y='95.7' width='2.6' height='4.3' fill='#22a391'/><line x1='592.4' y1='85.3' x2='592.4' y2='98.1' stroke='#22a391' stroke-width='0.7'/><rect x='591.10' y='85.7' width='2.6' height='11.3' fill='#22a391'/><line x1='596.0' y1='82.6' x2='596.0' y2='92.4' stroke='#22a391' stroke-width='0.7'/><rect x='594.70' y='83.7' width='2.6' height='6.7' fill='#22a391'/><line x1='599.4' y1='76.2' x2='599.4' y2='84.0' stroke='#22a391' stroke-width='0.7'/><rect x='598.10' y='78.3' width='2.6' height='4.7' fill='#22a391'/><line x1='602.8' y1='74.4' x2='602.8' y2='80.8' stroke='#22a391' stroke-width='0.7'/><rect x='601.50' y='76.4' width='2.6' height='2.6' fill='#22a391'/><line x1='606.5' y1='66.5' x2='606.5' y2='76.0' stroke='#22a391' stroke-width='0.7'/><rect x='605.20' y='68.7' width='2.6' height='6.5' fill='#22a391'/><line x1='610.2' y1='69.7' x2='610.2' y2='76.7' stroke='#ef4654' stroke-width='0.7'/><rect x='608.90' y='70.5' width='2.6' height='5.0' fill='#ef4654'/><line x1='613.7' y1='77.8' x2='613.7' y2='85.5' stroke='#22a391' stroke-width='0.7'/><rect x='612.40' y='78.3' width='2.6' height='5.4' fill='#22a391'/><line x1='617.2' y1='71.7' x2='617.2' y2='80.3' stroke='#22a391' stroke-width='0.7'/><rect x='615.90' y='73.3' width='2.6' height='5.0' fill='#22a391'/><line x1='620.4' y1='71.2' x2='620.4' y2='76.1' stroke='#ef4654' stroke-width='0.7'/><rect x='619.10' y='73.0' width='2.6' height='1.5' fill='#ef4654'/><line x1='624.4' y1='71.3' x2='624.4' y2='80.8' stroke='#ef4654' stroke-width='0.7'/><rect x='623.10' y='73.0' width='2.6' height='6.4' fill='#ef4654'/><line x1='627.9' y1='74.9' x2='627.9' y2='89.2' stroke='#ef4654' stroke-width='0.7'/><rect x='626.60' y='75.4' width='2.6' height='12.4' fill='#ef4654'/><line x1='631.9' y1='85.7' x2='631.9' y2='87.6' stroke='#22a391' stroke-width='0.7'/><rect x='630.60' y='86.0' width='2.6' height='1.0' fill='#22a391'/><line x1='634.8' y1='85.7' x2='634.8' y2='88.9' stroke='#22a391' stroke-width='0.7'/><rect x='633.50' y='87.5' width='2.6' height='1.0' fill='#22a391'/><line x1='638.6' y1='88.8' x2='638.6' y2='93.3' stroke='#22a391' stroke-width='0.7'/><rect x='637.30' y='89.3' width='2.6' height='3.5' fill='#22a391'/><line x1='642.3' y1='85.3' x2='642.3' y2='94.1' stroke='#ef4654' stroke-width='0.7'/><rect x='641.00' y='87.3' width='2.6' height='6.2' fill='#ef4654'/><line x1='646.0' y1='90.0' x2='646.0' y2='114.0' stroke='#ef4654' stroke-width='0.7'/><rect x='644.70' y='91.8' width='2.6' height='21.6' fill='#ef4654'/><line x1='649.2' y1='108.1' x2='649.2' y2='116.5' stroke='#22a391' stroke-width='0.7'/><rect x='647.90' y='108.4' width='2.6' height='6.2' fill='#22a391'/><line x1='652.7' y1='108.7' x2='652.7' y2='114.5' stroke='#ef4654' stroke-width='0.7'/><rect x='651.40' y='109.2' width='2.6' height='3.4' fill='#ef4654'/><line x1='656.0' y1='111.4' x2='656.0' y2='115.9' stroke='#ef4654' stroke-width='0.7'/><rect x='654.70' y='113.0' width='2.6' height='1.0' fill='#ef4654'/><line x1='659.7' y1='111.3' x2='659.7' y2='122.2' stroke='#ef4654' stroke-width='0.7'/><rect x='658.40' y='113.4' width='2.6' height='7.4' fill='#ef4654'/><line x1='663.4' y1='110.2' x2='663.4' y2='116.2' stroke='#22a391' stroke-width='0.7'/><rect x='662.10' y='112.0' width='2.6' height='3.8' fill='#22a391'/><line x1='666.6' y1='111.2' x2='666.6' y2='115.3' stroke='#22a391' stroke-width='0.7'/><rect x='665.30' y='113.0' width='2.6' height='1.0' fill='#22a391'/><line x1='670.0' y1='110.3' x2='670.0' y2='116.3' stroke='#ef4654' stroke-width='0.7'/><rect x='668.70' y='112.0' width='2.6' height='3.8' fill='#ef4654'/><line x1='674.0' y1='111.7' x2='674.0' y2='119.7' stroke='#ef4654' stroke-width='0.7'/><rect x='672.70' y='113.4' width='2.6' height='4.2' fill='#ef4654'/><line x1='677.5' y1='113.6' x2='677.5' y2='120.5' stroke='#22a391' stroke-width='0.7'/><rect x='676.20' y='114.0' width='2.6' height='5.6' fill='#22a391'/><line x1='681.5' y1='112.0' x2='681.5' y2='128.9' stroke='#ef4654' stroke-width='0.7'/><rect x='680.20' y='113.4' width='2.6' height='13.6' fill='#ef4654'/><line x1='684.5' y1='130.0' x2='684.5' y2='142.5' stroke='#22a391' stroke-width='0.7'/><rect x='683.20' y='130.8' width='2.6' height='3.2' fill='#22a391'/><line x1='688.2' y1='126.2' x2='688.2' y2='133.1' stroke='#22a391' stroke-width='0.7'/><rect x='686.90' y='127.0' width='2.6' height='5.5' fill='#22a391'/><line x1='692.0' y1='116.0' x2='692.0' y2='131.0' stroke='#ef4654' stroke-width='0.7'/><rect x='690.70' y='128.0' width='2.6' height='2.0' fill='#ef4654'/><line x1='695.7' y1='128.7' x2='695.7' y2='133.0' stroke='#ef4654' stroke-width='0.7'/><rect x='694.40' y='129.5' width='2.6' height='2.0' fill='#ef4654'/><line x1='699.0' y1='135.3' x2='699.0' y2='141.7' stroke='#ef4654' stroke-width='0.7'/><rect x='697.70' y='137.0' width='2.6' height='3.7' fill='#ef4654'/><line x1='702.4' y1='139.0' x2='702.4' y2='153.0' stroke='#ef4654' stroke-width='0.7'/><rect x='701.10' y='140.0' width='2.6' height='11.9' fill='#ef4654'/><line x1='706.3' y1='147.0' x2='706.3' y2='155.5' stroke='#ef4654' stroke-width='0.7'/><rect x='705.00' y='148.0' width='2.6' height='6.4' fill='#ef4654'/><line x1='709.3' y1='154.3' x2='709.3' y2='160.6' stroke='#ef4654' stroke-width='0.7'/><rect x='708.00' y='154.8' width='2.6' height='4.5' fill='#ef4654'/><line x1='713.0' y1='154.4' x2='713.0' y2='158.6' stroke='#ef4654' stroke-width='0.7'/><rect x='711.70' y='156.5' width='2.6' height='1.0' fill='#ef4654'/><line x1='716.3' y1='144.0' x2='716.3' y2='157.4' stroke='#22a391' stroke-width='0.7'/><rect x='715.00' y='145.7' width='2.6' height='11.1' fill='#22a391'/><line x1='719.8' y1='146.0' x2='719.8' y2='152.5' stroke='#ef4654' stroke-width='0.7'/><rect x='718.50' y='147.0' width='2.6' height='1.6' fill='#ef4654'/><line x1='723.7' y1='142.8' x2='723.7' y2='153.1' stroke='#22a391' stroke-width='0.7'/><rect x='722.40' y='144.4' width='2.6' height='7.0' fill='#22a391'/><line x1='727.2' y1='144.1' x2='727.2' y2='148.7' stroke='#ef4654' stroke-width='0.7'/><rect x='725.90' y='145.7' width='2.6' height='1.7' fill='#ef4654'/><line x1='731.0' y1='147.7' x2='731.0' y2='154.5' stroke='#22a391' stroke-width='0.7'/><rect x='729.70' y='148.9' width='2.6' height='4.1' fill='#22a391'/><line x1='734.2' y1='137.5' x2='734.2' y2='148.0' stroke='#22a391' stroke-width='0.7'/><rect x='732.90' y='139.5' width='2.6' height='7.9' fill='#22a391'/><line x1='737.9' y1='132.0' x2='737.9' y2='139.9' stroke='#ef4654' stroke-width='0.7'/><rect x='736.60' y='132.5' width='2.6' height='5.7' fill='#ef4654'/><line x1='741.6' y1='134.5' x2='741.6' y2='138.8' stroke='#22a391' stroke-width='0.7'/><rect x='740.30' y='136.5' width='2.6' height='1.0' fill='#22a391'/><line x1='745.3' y1='132.2' x2='745.3' y2='141.2' stroke='#22a391' stroke-width='0.7'/><rect x='744.00' y='133.3' width='2.6' height='6.2' fill='#22a391'/><line x1='748.6' y1='166.0' x2='748.6' y2='178.0' stroke='#ef4654' stroke-width='0.7'/><rect x='747.30' y='166.8' width='2.6' height='6.2' fill='#ef4654'/><rect x='802' y='122.5' width='99.5' height='11.3' fill='#44222e' stroke='#3f9a52' stroke-width='0.9'/><line x1='848.3' y1='140' x2='848.3' y2='153.5' stroke='#3f9a52' stroke-width='0.9'/><polyline points='844.3,144 848.3,140 852.3,144' fill='none' stroke='#3f9a52' stroke-width='0.9'/><rect x='802' y='223.1' width='99.7' height='12.9' fill='#44222e' stroke='#d83a4c' stroke-width='0.9'/><line x1='848.3' y1='200' x2='848.3' y2='216.7' stroke='#d83a4c' stroke-width='0.9'/><polyline points='844.3,212.7 848.3,216.7 852.3,212.7' fill='none' stroke='#d83a4c' stroke-width='0.9'/><line x1='802' y1='228' x2='949' y2='228' stroke='#b9a63a' stroke-width='1' opacity='0.6'/></g><rect x='55' y='341.5' width='894' height='114.5' fill='#141621'/><line x1='55' y1='341.5' x2='975' y2='341.5' stroke='#262a38' stroke-width='1.2'/><rect x='55' y='372.0' width='894' height='59.5' fill='#201d35'/><line x1='87.3' y1='341.5' x2='87.3' y2='456' stroke='#ffffff' stroke-opacity='0.035' stroke-width='0.8'/><line x1='119' y1='341.5' x2='119' y2='456' stroke='#ffffff' stroke-opacity='0.035' stroke-width='0.8'/><line x1='165.6' y1='341.5' x2='165.6' y2='456' stroke='#ffffff' stroke-opacity='0.035' stroke-width='0.8'/><line x1='197.4' y1='341.5' x2='197.4' y2='456' stroke='#ffffff' stroke-opacity='0.035' stroke-width='0.8'/><line x1='243.4' y1='341.5' x2='243.4' y2='456' stroke='#ffffff' stroke-opacity='0.035' stroke-width='0.8'/><line x1='275' y1='341.5' x2='275' y2='456' stroke='#ffffff' stroke-opacity='0.035' stroke-width='0.8'/><line x1='314.8' y1='341.5' x2='314.8' y2='456' stroke='#ffffff' stroke-opacity='0.035' stroke-width='0.8'/><line x1='347.4' y1='341.5' x2='347.4' y2='456' stroke='#ffffff' stroke-opacity='0.035' stroke-width='0.8'/><line x1='396.2' y1='341.5' x2='396.2' y2='456' stroke='#ffffff' stroke-opacity='0.035' stroke-width='0.8'/><line x1='428' y1='341.5' x2='428' y2='456' stroke='#ffffff' stroke-opacity='0.035' stroke-width='0.8'/><line x1='467.6' y1='341.5' x2='467.6' y2='456' stroke='#ffffff' stroke-opacity='0.035' stroke-width='0.8'/><line x1='500.6' y1='341.5' x2='500.6' y2='456' stroke='#ffffff' stroke-opacity='0.035' stroke-width='0.8'/><line x1='542.4' y1='341.5' x2='542.4' y2='456' stroke='#ffffff' stroke-opacity='0.035' stroke-width='0.8'/><line x1='574.4' y1='341.5' x2='574.4' y2='456' stroke='#ffffff' stroke-opacity='0.035' stroke-width='0.8'/><line x1='613.3' y1='341.5' x2='613.3' y2='456' stroke='#ffffff' stroke-opacity='0.035' stroke-width='0.8'/><line x1='645.7' y1='341.5' x2='645.7' y2='456' stroke='#ffffff' stroke-opacity='0.035' stroke-width='0.8'/><line x1='680.6' y1='341.5' x2='680.6' y2='456' stroke='#ffffff' stroke-opacity='0.035' stroke-width='0.8'/><line x1='712.9' y1='341.5' x2='712.9' y2='456' stroke='#ffffff' stroke-opacity='0.035' stroke-width='0.8'/><line x1='759' y1='341.5' x2='759' y2='456' stroke='#ffffff' stroke-opacity='0.035' stroke-width='0.8'/><line x1='791' y1='341.5' x2='791' y2='456' stroke='#ffffff' stroke-opacity='0.035' stroke-width='0.8'/><line x1='837' y1='341.5' x2='837' y2='456' stroke='#ffffff' stroke-opacity='0.035' stroke-width='0.8'/><line x1='869.5' y1='341.5' x2='869.5' y2='456' stroke='#ffffff' stroke-opacity='0.035' stroke-width='0.8'/><line x1='915' y1='341.5' x2='915' y2='456' stroke='#ffffff' stroke-opacity='0.035' stroke-width='0.8'/><line x1='947.8' y1='341.5' x2='947.8' y2='456' stroke='#ffffff' stroke-opacity='0.035' stroke-width='0.8'/><line x1='55' y1='342.2' x2='949' y2='342.2' stroke='#ffffff' stroke-opacity='0.04' stroke-width='0.8'/><line x1='55' y1='357.1' x2='949' y2='357.1' stroke='#ffffff' stroke-opacity='0.04' stroke-width='0.8'/><line x1='55' y1='386.9' x2='949' y2='386.9' stroke='#ffffff' stroke-opacity='0.04' stroke-width='0.8'/><line x1='55' y1='416.6' x2='949' y2='416.6' stroke='#ffffff' stroke-opacity='0.04' stroke-width='0.8'/><line x1='55' y1='446.4' x2='949' y2='446.4' stroke='#ffffff' stroke-opacity='0.04' stroke-width='0.8'/><line x1='55' y1='372.0' x2='949' y2='372.0' stroke='#6f7280' stroke-width='0.7' stroke-dasharray='1.8,1.8'/><line x1='55' y1='401.8' x2='949' y2='401.8' stroke='#6f7280' stroke-width='0.7' stroke-dasharray='1.8,1.8'/><line x1='55' y1='431.5' x2='949' y2='431.5' stroke='#6f7280' stroke-width='0.7' stroke-dasharray='1.8,1.8'/><path d='M55.1,411.3 L59.0,410.5 L62.8,413.6 L69.2,410.5 L76.9,419.0 L80.3,414.4 L83.3,423.3 L87.2,416.9 L92.3,418.2 L97.4,421.5 L102.6,427.2 L107.7,431.0 L111.5,430.3 L116.2,425.9 L119.2,432.3 L123.1,417.4 L126.4,415.6 L130.8,424.6 L133.3,427.7 L137.2,420.0 L141.0,423.3 L144.9,432.8 L147.9,443.8 L151.3,436.2 L155.1,428.5 L157.7,430.3 L161.5,427.2 L165.9,433.6 L170.5,439.5 L173.1,440.0 L176.2,435.4 L179.5,436.9 L183.3,425.9 L187.2,427.7 L191.0,425.9 L194.9,422.6 L198.2,423.3 L201.3,404.6 L205.1,402.3 L210.3,400.3 L215.4,394.4 L219.2,397.7 L223.1,392.6 L226.9,388.7 L230.8,390.0 L233.3,405.4 L239.7,404.6 L244.9,407.2 L250.0,411.8 L253.8,411.8 L257.7,418.2 L261.5,420.0 L265.4,405.4 L271.8,390.8 L275.6,393.3 L280.8,388.7 L285.9,386.2 L291.0,399.5 L294.1,404.1 L297.4,399.0 L300.8,404.1 L307.4,381.0 L311.8,393.8 L318.2,405.4 L321.3,403.6 L325.9,394.4 L332.3,388.2 L336.7,391.8 L339.2,392.6 L346.9,379.7 L350.3,378.5 L354.1,373.3 L357.9,388.2 L361.8,381.0 L365.6,377.2 L368.2,376.7 L372.1,384.9 L377.2,378.5 L382.3,373.8 L386.9,378.5 L390.0,380.5 L393.1,387.9 L397.2,371.3 L400.8,374.6 L404.1,374.6 L407.4,381.5 L411.0,380.5 L414.4,389.2 L418.2,382.3 L422.1,379.7 L425.9,374.6 L429.2,373.8 L434.9,396.9 L440.0,405.4 L446.9,393.8 L449.5,392.6 L453.6,384.9 L457.2,393.3 L464.4,391.8 L468.2,381.0 L471.5,377.2 L478.5,374.1 L481.8,354.1 L485.4,353.3 L489.5,361.0 L492.6,360.5 L496.4,370.3 L500.3,369.5 L502.8,371.3 L506.7,371.3 L510.5,388.2 L513.6,387.4 L520.8,382.3 L524.6,380.5 L531.0,380.3 L533.8,381.0 L539.0,385.6 L542.3,396.4 L545.9,391.3 L550.0,379.0 L554.4,381.5 L558.2,381.5 L563.3,377.9 L570.5,401.5 L574.9,407.2 L578.2,404.6 L581.3,405.4 L585.1,395.1 L588.5,390.8 L592.8,381.5 L596.7,378.5 L599.7,375.9 L602.3,375.4 L606.4,370.3 L610.0,378.5 L613.3,383.1 L617.2,379.2 L621.0,382.3 L624.4,384.1 L627.9,399.5 L631.3,397.7 L635.6,400.3 L639.0,403.6 L642.3,407.9 L645.4,425.1 L649.2,419.5 L652.6,422.1 L656.2,423.3 L659.5,427.7 L663.3,416.9 L667.2,417.4 L670.5,418.2 L674.1,420.8 L677.4,416.9 L681.3,427.7 L683.8,430.3 L689.0,425.1 L692.8,426.7 L696.7,429.7 L700.5,436.2 L703.1,441.3 L706.9,442.6 L710.0,445.1 L713.3,442.6 L716.7,423.3 L720.3,425.1 L723.6,418.2 L727.4,422.1 L730.5,422.6 L735.1,409.7 L738.2,407.2 L741.5,406.7 L745.4,402.8 L749.2,432.3' fill='none' stroke='#e3cf35' stroke-width='1.05' stroke-linejoin='round' clip-path='url(#rc)'/><text x='59' y='347.3' font-size='4.8' fill='#c0c3cc' text-anchor='start' font-weight='normal' dominant-baseline='central' >RSI 14</text><text x='77' y='347.3' font-size='4.8' fill='#d8c530' text-anchor='start' font-weight='normal' dominant-baseline='central' >29.77</text><line x1='949' y1='35.5' x2='949' y2='456' stroke='#22263a' stroke-width='0.8'/><text x='963' y='37.57999999999999' font-size='4.8' fill='#a3a6af' text-anchor='middle' font-weight='normal' dominant-baseline='central' >460.000</text><text x='963' y='53.81999999999999' font-size='4.8' fill='#a3a6af' text-anchor='middle' font-weight='normal' dominant-baseline='central' >440.000</text><text x='963' y='70.06' font-size='4.8' fill='#a3a6af' text-anchor='middle' font-weight='normal' dominant-baseline='central' >420.000</text><text x='963' y='86.3' font-size='4.8' fill='#a3a6af' text-anchor='middle' font-weight='normal' dominant-baseline='central' >400.000</text><text x='963' y='102.53999999999999' font-size='4.8' fill='#a3a6af' text-anchor='middle' font-weight='normal' dominant-baseline='central' >380.000</text><text x='963' y='118.78' font-size='4.8' fill='#a3a6af' text-anchor='middle' font-weight='normal' dominant-baseline='central' >360.000</text><text x='963' y='135.02' font-size='4.8' fill='#a3a6af' text-anchor='middle' font-weight='normal' dominant-baseline='central' >340.000</text><text x='963' y='151.26' font-size='4.8' fill='#a3a6af' text-anchor='middle' font-weight='normal' dominant-baseline='central' >320.000</text><text x='963' y='167.5' font-size='4.8' fill='#a3a6af' text-anchor='middle' font-weight='normal' dominant-baseline='central' >300.000</text><text x='963' y='183.74' font-size='4.8' fill='#a3a6af' text-anchor='middle' font-weight='normal' dominant-baseline='central' >280.000</text><text x='963' y='199.98000000000002' font-size='4.8' fill='#a3a6af' text-anchor='middle' font-weight='normal' dominant-baseline='central' >260.000</text><text x='963' y='216.22000000000003' font-size='4.8' fill='#a3a6af' text-anchor='middle' font-weight='normal' dominant-baseline='central' >240.000</text><text x='963' y='232.45999999999998' font-size='4.8' fill='#a3a6af' text-anchor='middle' font-weight='normal' dominant-baseline='central' >220.000</text><text x='963' y='248.7' font-size='4.8' fill='#a3a6af' text-anchor='middle' font-weight='normal' dominant-baseline='central' >200.000</text><text x='963' y='264.94' font-size='4.8' fill='#a3a6af' text-anchor='middle' font-weight='normal' dominant-baseline='central' >180.000</text><text x='963' y='281.18' font-size='4.8' fill='#a3a6af' text-anchor='middle' font-weight='normal' dominant-baseline='central' >160.000</text><text x='963' y='297.42' font-size='4.8' fill='#a3a6af' text-anchor='middle' font-weight='normal' dominant-baseline='central' >140.000</text><text x='963' y='313.66' font-size='4.8' fill='#a3a6af' text-anchor='middle' font-weight='normal' dominant-baseline='central' >120.000</text><text x='963' y='329.90000000000003' font-size='4.8' fill='#a3a6af' text-anchor='middle' font-weight='normal' dominant-baseline='central' >100.000</text><rect x='950.2' y='64.2' width='24' height='6' rx='0.8' fill='#f3e33b'/><text x='962.2' y='67.4' font-size='4.9' fill='#000' text-anchor='middle' font-weight='normal' dominant-baseline='central' >423.300</text><rect x='950.2' y='102.2' width='24' height='6' rx='0.8' fill='#f3e33b'/><text x='962.2' y='105.4' font-size='4.9' fill='#000' text-anchor='middle' font-weight='normal' dominant-baseline='central' >378.747</text><rect x='950.2' y='108.5' width='24' height='6' rx='0.8' fill='#9c27b0'/><text x='962.2' y='111.7' font-size='4.9' fill='#fff' text-anchor='middle' font-weight='normal' dominant-baseline='central' >360.376</text><rect x='950.2' y='115' width='24' height='6' rx='0.8' fill='#2962ff'/><text x='962.2' y='118.2' font-size='4.9' fill='#fff' text-anchor='middle' font-weight='normal' dominant-baseline='central' >349.134</text><rect x='950.2' y='121.8' width='24' height='6' rx='0.8' fill='#f3e33b'/><text x='962.2' y='125.0' font-size='4.9' fill='#000' text-anchor='middle' font-weight='normal' dominant-baseline='central' >348.218</text><rect x='950.2' y='128' width='24' height='6' rx='0.8' fill='#f23645'/><text x='962.2' y='131.2' font-size='4.9' fill='#fff' text-anchor='middle' font-weight='normal' dominant-baseline='central' >344.783</text><rect x='950.2' y='145' width='24' height='6' rx='0.8' fill='#f3e33b'/><text x='962.2' y='148.2' font-size='4.9' fill='#000' text-anchor='middle' font-weight='normal' dominant-baseline='central' >324.870</text><rect x='950.2' y='163.2' width='24' height='6' rx='0.8' fill='#f3e33b'/><text x='962.2' y='166.39999999999998' font-size='4.9' fill='#000' text-anchor='middle' font-weight='normal' dominant-baseline='central' >301.383</text><rect x='950.2' y='170.5' width='24' height='6' rx='0.8' fill='#f23645'/><text x='962.2' y='173.7' font-size='4.9' fill='#fff' text-anchor='middle' font-weight='normal' dominant-baseline='central' >292.500</text><rect x='950.2' y='187' width='24' height='6' rx='0.8' fill='#f3e33b'/><text x='962.2' y='190.2' font-size='4.9' fill='#000' text-anchor='middle' font-weight='normal' dominant-baseline='central' >272.593</text><rect x='950.2' y='225' width='24' height='6' rx='0.8' fill='#f3e33b'/><text x='962.2' y='228.2' font-size='4.9' fill='#000' text-anchor='middle' font-weight='normal' dominant-baseline='central' >225.340</text><rect x='950.2' y='262.5' width='24' height='6' rx='0.8' fill='#f3e33b'/><text x='962.2' y='265.7' font-size='4.9' fill='#000' text-anchor='middle' font-weight='normal' dominant-baseline='central' >179.487</text><rect x='950.2' y='286.2' width='24' height='6' rx='0.8' fill='#f3e33b'/><text x='962.2' y='289.4' font-size='4.9' fill='#000' text-anchor='middle' font-weight='normal' dominant-baseline='central' >150.987</text><rect x='950.2' y='324.5' width='24' height='6' rx='0.8' fill='#f3e33b'/><text x='962.2' y='327.7' font-size='4.9' fill='#000' text-anchor='middle' font-weight='normal' dominant-baseline='central' >104.335</text><text x='960.5' y='342.25' font-size='4.8' fill='#a3a6af' text-anchor='middle' font-weight='normal' dominant-baseline='central' >90.00</text><text x='960.5' y='357.125' font-size='4.8' fill='#a3a6af' text-anchor='middle' font-weight='normal' dominant-baseline='central' >80.00</text><text x='960.5' y='372.0' font-size='4.8' fill='#a3a6af' text-anchor='middle' font-weight='normal' dominant-baseline='central' >70.00</text><text x='960.5' y='386.875' font-size='4.8' fill='#a3a6af' text-anchor='middle' font-weight='normal' dominant-baseline='central' >60.00</text><text x='960.5' y='401.75' font-size='4.8' fill='#a3a6af' text-anchor='middle' font-weight='normal' dominant-baseline='central' >50.00</text><text x='960.5' y='416.625' font-size='4.8' fill='#a3a6af' text-anchor='middle' font-weight='normal' dominant-baseline='central' >40.00</text><text x='960.5' y='446.375' font-size='4.8' fill='#a3a6af' text-anchor='middle' font-weight='normal' dominant-baseline='central' >20.00</text><rect x='950.2' y='429.1' width='18.3' height='6.8' rx='0.8' fill='#f3e33b'/><text x='959.3' y='432.6' font-size='4.9' fill='#000' text-anchor='middle' font-weight='normal' dominant-baseline='central' >29.77</text><line x1='55' y1='469.3' x2='975' y2='469.3' stroke='#262a38' stroke-width='1'/><text x='87.3' y='464.2' font-size='4.6' fill='#868994' text-anchor='middle' font-weight='normal' dominant-baseline='central' >Jul</text><text x='119' y='464.2' font-size='4.6' fill='#868994' text-anchor='middle' font-weight='normal' dominant-baseline='central' >15</text><text x='165.6' y='464.2' font-size='4.6' fill='#868994' text-anchor='middle' font-weight='normal' dominant-baseline='central' >Aug</text><text x='197.4' y='464.2' font-size='4.6' fill='#868994' text-anchor='middle' font-weight='normal' dominant-baseline='central' >14</text><text x='243.4' y='464.2' font-size='4.6' fill='#868994' text-anchor='middle' font-weight='normal' dominant-baseline='central' >Sep</text><text x='275' y='464.2' font-size='4.6' fill='#868994' text-anchor='middle' font-weight='normal' dominant-baseline='central' >16</text><text x='314.8' y='464.2' font-size='4.6' fill='#868994' text-anchor='middle' font-weight='normal' dominant-baseline='central' >Oct</text><text x='347.4' y='464.2' font-size='4.6' fill='#868994' text-anchor='middle' font-weight='normal' dominant-baseline='central' >14</text><text x='396.2' y='464.2' font-size='4.6' fill='#868994' text-anchor='middle' font-weight='normal' dominant-baseline='central' >Nov</text><text x='428' y='464.2' font-size='4.6' fill='#868994' text-anchor='middle' font-weight='normal' dominant-baseline='central' >14</text><text x='467.6' y='464.2' font-size='4.6' fill='#868994' text-anchor='middle' font-weight='normal' dominant-baseline='central' >Dec</text><text x='500.6' y='464.2' font-size='4.6' fill='#868994' text-anchor='middle' font-weight='normal' dominant-baseline='central' >13</text><text x='542.4' y='464.2' font-size='4.6' fill='#868994' text-anchor='middle' font-weight='bold' dominant-baseline='central' >2025</text><text x='574.4' y='464.2' font-size='4.6' fill='#868994' text-anchor='middle' font-weight='normal' dominant-baseline='central' >16</text><text x='613.3' y='464.2' font-size='4.6' fill='#868994' text-anchor='middle' font-weight='normal' dominant-baseline='central' >Feb</text><text x='645.7' y='464.2' font-size='4.6' fill='#868994' text-anchor='middle' font-weight='normal' dominant-baseline='central' >14</text><text x='680.6' y='464.2' font-size='4.6' fill='#868994' text-anchor='middle' font-weight='normal' dominant-baseline='central' >Mar</text><text x='712.9' y='464.2' font-size='4.6' fill='#868994' text-anchor='middle' font-weight='normal' dominant-baseline='central' >14</text><text x='759' y='464.2' font-size='4.6' fill='#868994' text-anchor='middle' font-weight='normal' dominant-baseline='central' >Apr</text><text x='791' y='464.2' font-size='4.6' fill='#868994' text-anchor='middle' font-weight='normal' dominant-baseline='central' >14</text><text x='837' y='464.2' font-size='4.6' fill='#868994' text-anchor='middle' font-weight='normal' dominant-baseline='central' >May</text><text x='869.5' y='464.2' font-size='4.6' fill='#868994' text-anchor='middle' font-weight='normal' dominant-baseline='central' >14</text><text x='915' y='464.2' font-size='4.6' fill='#868994' text-anchor='middle' font-weight='normal' dominant-baseline='central' >Jun</text><text x='947.8' y='464.2' font-size='4.6' fill='#868994' text-anchor='middle' font-weight='normal' dominant-baseline='central' >13</text><circle cx='963.4' cy='463.8' r='3.2' fill='none' stroke='#b2b5be' stroke-width='0.7'/><circle cx='963.4' cy='463.8' r='1.2' fill='none' stroke='#b2b5be' stroke-width='0.6'/><text x='61.8' y='477.8' font-size='4.5' fill='#6a6d78' text-anchor='start' font-weight='normal' dominant-baseline='central' >Powered by</text><text x='86.5' y='477.8' font-size='4.6' fill='#2f7ce0' text-anchor='start' font-weight='normal' dominant-baseline='central' text-decoration='underline'>TradingView</text><text x='125' y='477.8' font-size='5.2' fill='#b2b5be' text-anchor='middle' font-weight='normal' dominant-baseline='central' >1D</text><text x='136.8' y='477.8' font-size='5.2' fill='#b2b5be' text-anchor='middle' font-weight='normal' dominant-baseline='central' >5D</text><text x='149.2' y='477.8' font-size='5.2' fill='#b2b5be' text-anchor='middle' font-weight='normal' dominant-baseline='central' >1M</text><text x='161.3' y='477.8' font-size='5.2' fill='#b2b5be' text-anchor='middle' font-weight='normal' dominant-baseline='central' >3M</text><text x='173.6' y='477.8' font-size='5.2' fill='#b2b5be' text-anchor='middle' font-weight='normal' dominant-baseline='central' >6M</text><text x='185.8' y='477.8' font-size='5.2' fill='#b2b5be' text-anchor='middle' font-weight='normal' dominant-baseline='central' >1Y</text><text x='197' y='477.8' font-size='5.2' fill='#b2b5be' text-anchor='middle' font-weight='normal' dominant-baseline='central' >5Y</text><text x='208.5' y='477.8' font-size='5.2' fill='#b2b5be' text-anchor='middle' font-weight='normal' dominant-baseline='central' >All</text><path d='M220.5,474.5 h5 v6 h-5 M219,479 l1.5,1.5 l1.5,-1.5' fill='none' stroke='#b2b5be' stroke-width='0.6'/><text x='930.6' y='477.8' font-size='5.6' fill='#b2b5be' text-anchor='end' font-weight='normal' dominant-baseline='central' >08:40:47 (UTC+2)</text><line x1='936' y1='473.5' x2='936' y2='482' stroke='#2a2e39' stroke-width='0.7'/><text x='941.5' y='477.8' font-size='5.2' fill='#b2b5be' text-anchor='middle' font-weight='normal' dominant-baseline='central' >%</text><text x='952.3' y='477.8' font-size='5.2' fill='#b2b5be' text-anchor='middle' font-weight='normal' dominant-baseline='central' >log</text><text x='966.5' y='477.8' font-size='5.2' fill='#b2b5be' text-anchor='middle' font-weight='normal' dominant-baseline='central' >auto</text><line x1='33.6' y1='20.5' x2='33.6' y2='483' stroke='#1f2230' stroke-width='1'/><path d='M8.2,8.6 Q9.6,7.9 10.6,9 L12.3,11.6 L17.6,3.7 Q18.4,3.2 18.8,3.8 L12.9,13.6 Q12.2,14.4 11.5,13.6 Z' fill='#ffffff'/><path d='M8.8,28.3 L13.6,24.2 L18.5,28.3 L17.2,28.3 L17.2,33 L10.1,33 L10.1,28.3 Z' fill='#2f8bff'/><text x='13.4' y='38.1' font-size='4.7' fill='#2f8bff' text-anchor='middle' font-weight='normal' dominant-baseline='central' >Märkte</text><rect x='9.6' y='53.6' width='8' height='8.3' rx='1.6' fill='#6f737d'/><rect x='9.6' y='53.6' width='8' height='2.6' rx='1' fill='#a4a8b1'/><path d='M11,54 l0.8,-2 l0.8,2 Z M14.6,54 l0.8,-2 l0.8,2 Z' fill='#a4a8b1'/><rect x='14.2' y='58.2' width='1.8' height='1.6' fill='#15171f'/><rect x='11.2' y='57.6' width='0.9' height='2.6' fill='#4a4e58'/><text x='13.5' y='66' font-size='4.9' fill='#d0d3da' text-anchor='middle' font-weight='normal' dominant-baseline='central' stroke='#d0d3da' stroke-width='0.1'>Kalender</text><rect x='9.4' y='81.7' width='8.2' height='6.9' rx='1.6' fill='none' stroke='#9a9ea8' stroke-width='0.95'/><polyline points='10.6,83.4 13.5,85.9 16.4,83.4' fill='none' stroke='#9a9ea8' stroke-width='0.95'/><text x='13.6' y='94.5' font-size='4.9' fill='#d0d3da' text-anchor='middle' font-weight='normal' dominant-baseline='central' stroke='#d0d3da' stroke-width='0.1'>Nachrichten</text><rect x='9' y='109.2' width='8.9' height='8.2' rx='1.8' fill='#8a8e98'/><rect x='12.2' y='110.8' width='4.6' height='0.7' fill='#15171f' opacity='0.5'/><rect x='12.3' y='112.8' width='4.3' height='0.9' fill='#15171f' opacity='0.7'/><rect x='12.3' y='115' width='4.3' height='0.9' fill='#15171f'/><rect x='10' y='110' width='1.8' height='6.6' fill='#9fa3ac'/><text x='13.6' y='122.7' font-size='4.9' fill='#d0d3da' text-anchor='middle' font-weight='normal' dominant-baseline='central' stroke='#d0d3da' stroke-width='0.1'>Nachrichten</text><circle cx='13.5' cy='452.5' r='3.6' fill='none' stroke='#b8bbc4' stroke-width='0.8'/><path d='M13.5,448.9 A3.6,3.6 0 0 1 13.5,456.1 Z' fill='#b8bbc4'/><circle cx='13.5' cy='473.2' r='3.6' fill='none' stroke='#b8bbc4' stroke-width='0.8'/><text x='13.5' y='473.4' font-size='4.6' fill='#b8bbc4' text-anchor='middle' font-weight='normal' dominant-baseline='central' >?</text><text x='35.5' y='10.4' font-size='8.3' fill='#c8cad2' text-anchor='start' font-weight='normal' dominant-baseline='central' >Märkte</text><circle cx='40.2' cy='27.5' r='2.3' fill='none' stroke='#d8dae0' stroke-width='0.9'/><line x1='41.8' y1='29.1' x2='43.3' y2='30.6' stroke='#d8dae0' stroke-width='0.9'/><text x='44.6' y='28' font-size='6.0' fill='#e0e2e8' text-anchor='start' font-weight='normal' dominant-baseline='central' textLength='22.6' lengthAdjust='spacingAndGlyphs' stroke='#e0e2e8' stroke-width='0.12'>LULU.US</text><circle cx='79.5' cy='28' r='4.1' fill='none' stroke='#b8bbc4' stroke-width='0.7'/><line x1='79.5' y1='25.7' x2='79.5' y2='30.3' stroke='#b8bbc4' stroke-width='0.7'/><polyline points='78.2,27 79.5,25.7 80.8,27' fill='none' stroke='#b8bbc4' stroke-width='0.5'/><line x1='88.5' y1='24' x2='88.5' y2='32' stroke='#2a2e39' stroke-width='0.7'/><line x1='106.4' y1='24' x2='106.4' y2='32' stroke='#2a2e39' stroke-width='0.7'/><text x='97' y='28' font-size='6' fill='#d8dae0' text-anchor='middle' font-weight='normal' dominant-baseline='central' >D</text><text x='115' y='28' font-size='6.5' fill='#d8dae0' text-anchor='middle' font-weight='normal' dominant-baseline='central' >{ }</text><path d='M131,25 l1.5,1.8 l-2,2.2 h3.5 M133.5,31 l1,-1 l1,1' fill='none' stroke='#d8dae0' stroke-width='0.7'/><text x='139.7' y='28' font-size='5.6' fill='#d8dae0' text-anchor='start' font-weight='normal' dominant-baseline='central' >Indicators</text><path d='M175,29.5 l-1.6,-1.6 l1.6,-1.6 M173.5,27.9 h3.5 a2,2 0 0 1 0,4' fill='none' stroke='#6a6d78' stroke-width='0.6'/><path d='M190,29.5 l1.6,-1.6 l-1.6,-1.6 M191.5,27.9 h-3.5 a2,2 0 0 0 0,4' fill='none' stroke='#4a4d58' stroke-width='0.6'/><line x1='55' y1='35.3' x2='975' y2='35.3' stroke='#222634' stroke-width='0.9'/><line x1='55' y1='35.3' x2='55' y2='456' stroke='#1e2230' stroke-width='0.9'/><rect x='885.8' y='24.2' width='7.2' height='7.2' rx='1.2' fill='none' stroke='#b0b3bc' stroke-width='0.8'/><line x1='886' y1='28.8' x2='892.8' y2='28.8' stroke='#b0b3bc' stroke-width='0.7'/><text x='908.3' y='26.6' font-size='5.3' fill='#c8cad0' text-anchor='middle' font-weight='normal' dominant-baseline='central' >Save</text><text x='908.2' y='31.6' font-size='4' fill='#2f7ce0' text-anchor='middle' font-weight='normal' dominant-baseline='central' >Save</text><polyline points='923.6,27.3 924.6,28.3 925.6,27.3' fill='none' stroke='#9a9da8' stroke-width='0.6'/><line x1='930.5' y1='24' x2='930.5' y2='32' stroke='#2a2e39' stroke-width='0.7'/><circle cx='938' cy='27.6' r='2.6' fill='none' stroke='#c0c3cc' stroke-width='0.8'/><line x1='939.8' y1='29.5' x2='941.3' y2='31' stroke='#c0c3cc' stroke-width='0.8'/><path d='M954.2,24.3 l0.9,0.9 h1.3 v1.3 l0.9,0.9 l-0.9,0.9 v1.3 h-1.3 l-0.9,0.9 l-0.9,-0.9 h-1.3 v-1.3 l-0.9,-0.9 l0.9,-0.9 v-1.3 h1.3 Z' fill='none' stroke='#b0b3bc' stroke-width='0.75'/><circle cx='954.2' cy='27.8' r='1.1' fill='none' stroke='#b0b3bc' stroke-width='0.6'/><path d='M964.3,30.8 v-4.6 a1,1 0 0 1 1,-1 h1 l0.8,-0.9 h1.8 l0.8,0.9 h1 a1,1 0 0 1 1,1 v4.6 Z' fill='none' stroke='#b0b3bc' stroke-width='0.75'/><circle cx='968.2' cy='28.1' r='1.4' fill='none' stroke='#b0b3bc' stroke-width='0.6'/><text x='58.5' y='41.9' font-size='6.0' fill='#d8dae0' text-anchor='start' font-weight='normal' dominant-baseline='central' >LULU.US · 1D</text><circle cx='105.6' cy='41.8' r='2.9' fill='#3a3d48'/><line x1='104.2' y1='41.8' x2='107' y2='41.8' stroke='#d8dae0' stroke-width='0.7'/><text x='114.6' y='41.9' font-size='5.5' fill='#c8cad0' text-anchor='start' font-weight='normal' dominant-baseline='central' >O</text><text x='118.5' y='41.9' font-size='5.5' fill='#ef4654' text-anchor='start' font-weight='normal' dominant-baseline='central' >300.260</text><text x='141.3' y='41.9' font-size='5.5' fill='#c8cad0' text-anchor='start' font-weight='normal' dominant-baseline='central' >H</text><text x='145.2' y='41.9' font-size='5.5' fill='#ef4654' text-anchor='start' font-weight='normal' dominant-baseline='central' >302.242</text><text x='168.1' y='41.9' font-size='5.5' fill='#c8cad0' text-anchor='start' font-weight='normal' dominant-baseline='central' >L</text><text x='171' y='41.9' font-size='5.5' fill='#ef4654' text-anchor='start' font-weight='normal' dominant-baseline='central' >287.400</text><text x='193' y='41.9' font-size='5.5' fill='#c8cad0' text-anchor='start' font-weight='normal' dominant-baseline='central' >C</text><text x='197.6' y='41.9' font-size='5.5' fill='#ef4654' text-anchor='start' font-weight='normal' dominant-baseline='central' >292.500</text><text x='219.8' y='41.9' font-size='5.5' fill='#ef4654' text-anchor='start' font-weight='normal' dominant-baseline='central' >−48.080 (−14.37%)</text><rect x='58.5' y='47.5' width='26.3' height='14' rx='1.2' fill='#171a24' stroke='#3a2a34' stroke-width='0.6'/><path d='M58.6,50 v-1.3 a1.2,1.2 0 0 1 1.2,-1.2 h23.8 a1.2,1.2 0 0 1 1.2,1.2 v1.3' fill='none' stroke='#b83a3e' stroke-width='1.1'/><text x='71.6' y='54.9' font-size='5.4' fill='#e04050' text-anchor='middle' font-weight='normal' dominant-baseline='central' >292.500</text><rect x='87.8' y='53.5' width='12' height='8' fill='#1d202b'/><text x='94' y='50.3' font-size='4.4' fill='#a3a6af' text-anchor='middle' font-weight='normal' dominant-baseline='central' >0.37</text><text x='94' y='57.8' font-size='5.2' fill='#c8cad2' text-anchor='middle' font-weight='normal' dominant-baseline='central' >0.01</text><rect x='104' y='47.5' width='26.7' height='14' rx='1.2' fill='#171a24' stroke='#1f9a8a' stroke-width='0.8'/><text x='117.3' y='54.9' font-size='5.4' fill='#22a391' text-anchor='middle' font-weight='normal' dominant-baseline='central' >292.870</text><text x='59' y='68.5' font-size='5.3' fill='#c0c3cc' text-anchor='start' font-weight='normal' dominant-baseline='central' >EMA 100 close 0</text><text x='101.6' y='68.5' font-size='5.4' fill='#2f6be8' text-anchor='start' font-weight='normal' dominant-baseline='central' >349.134</text><text x='59' y='77.9' font-size='5.3' fill='#c0c3cc' text-anchor='start' font-weight='normal' dominant-baseline='central' >EMA 50 close 0</text><text x='98.7' y='77.9' font-size='5.4' fill='#a23ec8' text-anchor='start' font-weight='normal' dominant-baseline='central' >352.015</text><text x='59' y='87.2' font-size='5.3' fill='#c0c3cc' text-anchor='start' font-weight='normal' dominant-baseline='central' >EMA 200 close 0</text><text x='101.6' y='87.2' font-size='5.4' fill='#ef4654' text-anchor='start' font-weight='normal' dominant-baseline='central' >344.783</text><rect x='59.5' y='92.5' width='9' height='7' rx='1' fill='#1a1d28' stroke='#2a2e39' stroke-width='0.6'/><polyline points='62.3,96.8 64,95 65.7,96.8' fill='none' stroke='#b2b5be' stroke-width='0.6'/><path d='M44,40 v3.4 M44,45.8 v3.4 M39.8,44.6 h3.2 M45.2,44.6 h3.2' stroke='#2c52b8' stroke-width='1.1'/><circle cx='42' cy='58.8' r='0.6' fill='#c0c3cc'/><path d='M39.8,68.5 h8 M40,72.2 h6.8 M39.5,75.8 h8.5' stroke='#c0c3cc' stroke-width='0.9'/><circle cx='48' cy='70.6' r='0.8' fill='none' stroke='#c0c3cc' stroke-width='0.5'/><path d='M40.5,82.5 L47.5,89 M47.5,82.5 L40.5,89' stroke='#c0c3cc' stroke-width='0.8'/><circle cx='40.3' cy='82.3' r='0.8' fill='#c0c3cc'/><circle cx='47.7' cy='82.3' r='0.8' fill='#c0c3cc'/><circle cx='40.3' cy='89.2' r='0.8' fill='#c0c3cc'/><circle cx='47.7' cy='89.2' r='0.8' fill='#c0c3cc'/><path d='M40.5,100.5 h7.5 M46,98.5 l2,2 l-2,2 M40.5,93.5 v2.5' stroke='#c0c3cc' stroke-width='0.8' fill='none'/><circle cx='40.5' cy='100.5' r='0.8' fill='#c0c3cc'/><path d='M40,117.3 L47.8,109.8' stroke='#c0c3cc' stroke-width='0.8'/><circle cx='40' cy='117.3' r='0.9' fill='#c0c3cc'/><circle cx='47.8' cy='109.8' r='0.9' fill='#c0c3cc'/><circle cx='43.9' cy='113.5' r='0.8' fill='#c0c3cc'/><path d='M40.6,124.8 v-1 h6.8 v1 M44,123.8 v6.4 M43,130.2 h2' fill='none' stroke='#c0c3cc' stroke-width='0.8'/><circle cx='43.5' cy='140.6' r='3.3' fill='none' stroke='#c0c3cc' stroke-width='0.7'/><path d='M41.9,141.5 q1.6,1.4 3.2,0' fill='none' stroke='#c0c3cc' stroke-width='0.5'/><line x1='38.5' y1='150.5' x2='48.5' y2='150.5' stroke='#2a2e39' stroke-width='0.7'/><path d='M40,163.5 L46.5,157 L48,158.5 L41.5,165 Z' fill='none' stroke='#c0c3cc' stroke-width='0.7'/><circle cx='43' cy='172.5' r='2.6' fill='none' stroke='#c0c3cc' stroke-width='0.7'/><line x1='44.8' y1='174.4' x2='46.8' y2='176.4' stroke='#c0c3cc' stroke-width='0.7'/><path d='M41,195.6 v-3.3 a2.7,2.7 0 0 1 5.4,0 v3.3 M40.3,195.6 h1.5 M45.6,195.6 h1.5' fill='none' stroke='#c0c3cc' stroke-width='0.9'/><path d='M40.2,205.5 L44,201.7 L45.8,203.5 L42,207.3 Z' fill='#c0c3cc'/><rect x='44.6' y='206' width='2.8' height='2.8' rx='0.5' fill='#c0c3cc'/><path d='M45.2,206 v-0.8 a0.8,0.8 0 0 1 1.6,0 v0.8' fill='none' stroke='#c0c3cc' stroke-width='0.5'/><rect x='40.8' y='219.3' width='5.8' height='4.6' rx='0.8' fill='none' stroke='#c0c3cc' stroke-width='0.8'/><path d='M42,219.3 v-1.8 a1.7,1.7 0 0 1 3.4,0 v0.3' fill='none' stroke='#c0c3cc' stroke-width='0.8'/><path d='M39.5,232.5 q4,-4 8,0 q-4,4 -8,0 Z' fill='none' stroke='#c0c3cc' stroke-width='0.7'/><circle cx='43.5' cy='232.5' r='1' fill='#c0c3cc'/><line x1='45' y1='236' x2='47.5' y2='234.5' stroke='#c0c3cc' stroke-width='0.6'/><path d='M40.5,250 h6 M41.3,250 v5 h4.4 v-5 M42.5,250 v-1 h2 v1' fill='none' stroke='#c0c3cc' stroke-width='0.7'/><polyline points='33,262.5 34.5,264.3 33,266' fill='none' stroke='#8a8d96' stroke-width='0.6'/><polyline points='54.5,456.5 53,458.5 54.5,460.5' fill='none' stroke='#6a6d78' stroke-width='0.6'/><rect x='656.9' y='2.3' width='68.4' height='13.4' rx='2' fill='#1d7ce0'/><text x='691.3' y='9.2' font-size='5.5' fill='#ffffff' text-anchor='middle' font-weight='normal' dominant-baseline='central' stroke='#fff' stroke-width='0.12'>Zu Live-Konto wechseln</text><text x='760.2' y='5.8' font-size='5.4' fill='#c8cad0' text-anchor='end' font-weight='normal' dominant-baseline='central' textLength='28.5' lengthAdjust='spacingAndGlyphs'>€ 100.000,00</text><text x='760.2' y='12.8' font-size='4.7' fill='#a3a6af' text-anchor='end' font-weight='normal' dominant-baseline='central' >Kontostand</text><text x='804' y='5.8' font-size='5.4' fill='#c8cad0' text-anchor='end' font-weight='normal' dominant-baseline='central' textLength='28.5' lengthAdjust='spacingAndGlyphs'>€ 100.000,00</text><text x='804' y='12.8' font-size='4.7' fill='#a3a6af' text-anchor='end' font-weight='normal' dominant-baseline='central' >Verfügbarer Kredit</text><text x='827' y='5.8' font-size='5.4' fill='#c8cad0' text-anchor='end' font-weight='normal' dominant-baseline='central' >€ 0,00</text><text x='827' y='12.8' font-size='4.7' fill='#a3a6af' text-anchor='end' font-weight='normal' dominant-baseline='central' >Margin</text><text x='864.2' y='5.8' font-size='5.4' fill='#c8cad0' text-anchor='end' font-weight='normal' dominant-baseline='central' >€ 0,00</text><text x='864.2' y='12.8' font-size='4.7' fill='#a3a6af' text-anchor='end' font-weight='normal' dominant-baseline='central' >Gewinn/Verlust</text><rect x='872.6' y='2.5' width='16.2' height='6.3' fill='none' stroke='#8a6a1a' stroke-width='0.5' stroke-dasharray='1,1.6'/><text x='880.7' y='5.8' font-size='4.4' fill='#e8b422' text-anchor='middle' font-weight='normal' dominant-baseline='central' stroke='#e8b422' stroke-width='0.15'>DEMO</text><text x='881' y='13.6' font-size='4.4' fill='#a3a6af' text-anchor='middle' font-weight='normal' dominant-baseline='central' >Account</text><text x='955' y='6.5' font-size='5.5' fill='#d8dae0' text-anchor='end' font-weight='normal' dominant-baseline='central' >Dirk Friczewsky</text><text x='955' y='12.4' font-size='4.3' fill='#a3a6af' text-anchor='end' font-weight='normal' dominant-baseline='central' >dirk.friczewsky@gmail.com</text><circle cx='964.1' cy='9.1' r='5.6' fill='#c8cbd3'/><circle cx='964.1' cy='7.6' r='1.9' fill='#1a1c25'/><path d='M960.9,12.6 a3.2,2.4 0 0 1 6.4,0 Z' fill='#1a1c25'/></svg>
</body></html>
